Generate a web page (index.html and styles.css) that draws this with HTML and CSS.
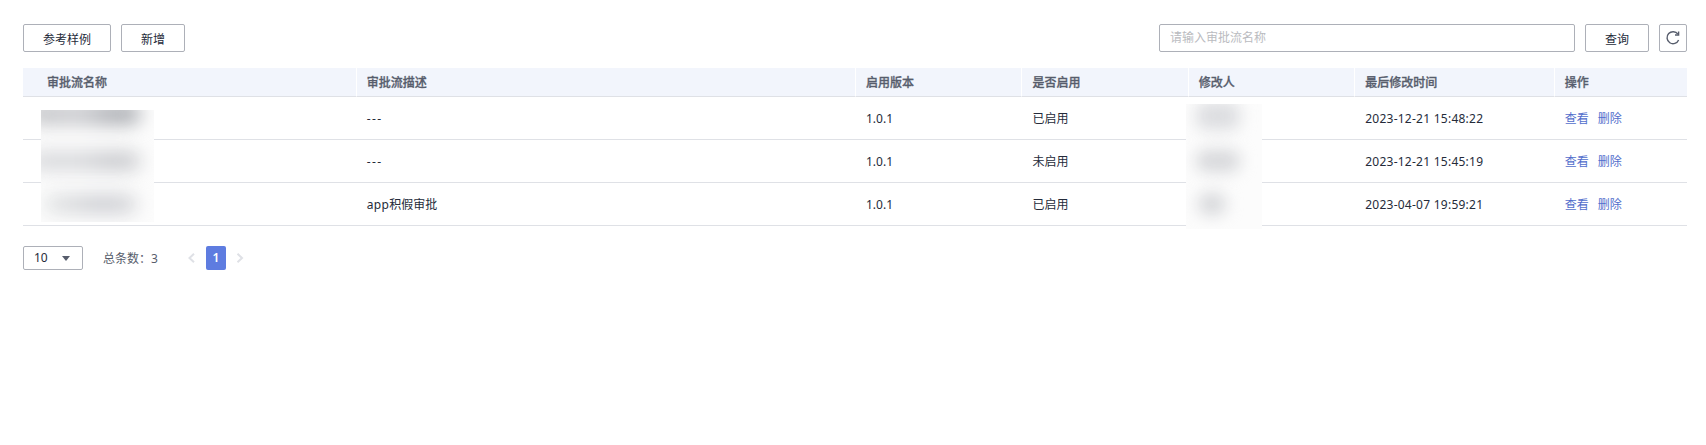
FILE: index.html
```
<!DOCTYPE html>
<html lang="zh-CN">
<head>
    <meta charset="UTF-8">
    <meta name="viewport" content="width=device-width, initial-scale=1.0">
    <title>审批流</title>
    <link rel="stylesheet" href="styles.css">
</head>
<body>
    <div class="toolbar">
        <button class="btn btn-wide">参考样例</button>
        <button class="btn">新增</button>
        <input type="text" class="search-input" placeholder="请输入审批流名称">
        <button class="btn">查询</button>
        <button class="btn btn-icon">
            <svg width="16" height="16" viewBox="0 0 16 16" fill="none" stroke="#575d6c" stroke-width="1.4">
                <path d="M13.6 10A6 6 0 1 1 12.9 4.2"/>
                <path d="M13.6 1.6V5H10"/>
            </svg>
        </button>
    </div>

    <div class="table-wrap">
        <table class="flow-table">
            <colgroup>
                <col class="col-name">
                <col class="col-desc">
                <col class="col-small">
                <col class="col-small">
                <col class="col-small">
                <col class="col-time">
                <col class="col-action">
            </colgroup>
            <thead>
                <tr>
                    <th>审批流名称</th>
                    <th>审批流描述</th>
                    <th>启用版本</th>
                    <th>是否启用</th>
                    <th>修改人</th>
                    <th>最后修改时间</th>
                    <th>操作</th>
                </tr>
            </thead>
            <tbody>
                <tr>
                    <td></td>
                    <td class="dashes">---</td>
                    <td class="version">1.0.1</td>
                    <td>已启用</td>
                    <td></td>
                    <td class="time">2023-12-21 15:48:22</td>
                    <td><a class="link">查看</a><a class="link">删除</a></td>
                </tr>
                <tr>
                    <td></td>
                    <td class="dashes">---</td>
                    <td class="version">1.0.1</td>
                    <td>未启用</td>
                    <td></td>
                    <td class="time">2023-12-21 15:45:19</td>
                    <td><a class="link">查看</a><a class="link">删除</a></td>
                </tr>
                <tr>
                    <td></td>
                    <td><span class="app">app</span>积假审批</td>
                    <td class="version">1.0.1</td>
                    <td>已启用</td>
                    <td></td>
                    <td class="time">2023-04-07 19:59:21</td>
                    <td><a class="link">查看</a><a class="link">删除</a></td>
                </tr>
            </tbody>
        </table>
        <!-- 脱敏遮罩 -->
        <div class="mask mask-name"><i></i><i></i><i></i></div>
        <div class="mask mask-user"><i></i><i></i><i></i></div>
    </div>

    <div class="pagination">
        <div class="page-size"><span>10</span><span class="caret"></span></div>
        <span class="total">总条数：<span class="total-num">3</span></span>
        <svg class="arrow" width="8" height="10" viewBox="0 0 8 10"><path d="M6 .8L1.5 5 6 9.2"/></svg>
        <span class="page-current">1</span>
        <svg class="arrow" width="8" height="10" viewBox="0 0 8 10"><path d="M1.5 .8L6 5 1.5 9.2"/></svg>
    </div>
</body>
</html>
```

FILE: styles.css
```
* {
    box-sizing: border-box;
}
body {
    margin: 0;
    padding: 24px 19px 0 23px;
    background: #fff;
    color: #252b3a;
    font-family: "Noto Sans", "Noto Sans CJK SC", sans-serif;
    font-size: 12px;
}
.toolbar {
    display: flex;
    gap: 10px;
    height: 28px;
}
.btn {
    display: flex;
    align-items: center;
    justify-content: center;
    width: 64px;
    height: 28px;
    padding: 1px 0 0;
    border: 1px solid #adb0b8;
    border-radius: 2px;
    background: #fff;
    color: #252b3a;
    font-family: inherit;
    font-size: 12px;
}
.btn-wide {
    width: 88px;
}
.btn-icon {
    width: 28px;
    padding: 0;
}
.search-input {
    width: 416px;
    height: 28px;
    margin-left: auto;
    padding: 0 10px 2px;
    border: 1px solid #adb0b8;
    border-radius: 2px;
    font-family: inherit;
    font-size: 12px;
}
.search-input::placeholder {
    color: #babbc0;
}
.table-wrap {
    position: relative;
    margin-top: 16px;
}
.flow-table {
    width: 100%;
    table-layout: fixed;
    border-spacing: 0;
}
.col-name {
    width: 20%;
}
.col-desc {
    width: 30%;
}
.col-small {
    width: 10%;
}
.col-time {
    width: 12%;
}
.col-action {
    width: 8%;
}
.flow-table th {
    height: 29px;
    padding: 2px 0 0 10px;
    border-left: 1px solid #fff;
    border-bottom: 1px solid #dfe1e6;
    background: #f2f5fc;
    color: #575d6c;
    font-weight: 500;
    line-height: 18px;
    text-align: left;
    -webkit-text-stroke: 0.3px #575d6c;
}
.flow-table td {
    height: 43px;
    padding: 2px 0 0 11px;
    border-bottom: 1px solid #dfe1e6;
    line-height: 18px;
}
.flow-table th:first-child {
    padding-left: 24px;
    border-left: none;
}
.dashes {
    letter-spacing: 1.4px;
}
.app {
    letter-spacing: 0.3px;
}
.time {
    letter-spacing: 0.25px;
}
.link {
    margin-right: 9px;
    color: #526ecc;
    cursor: pointer;
}
.mask {
    position: absolute;
    overflow: hidden;
    background: #fcfcfc;
}
.mask i {
    position: absolute;
    border-radius: 10px;
    filter: blur(9px);
}
.mask-name {
    left: 18px;
    top: 42px;
    width: 113px;
    height: 112px;
}
.mask-name i {
    left: -12px;
    width: 112px;
    height: 20px;
    background: linear-gradient(90deg, #dadbde, #d9dadd 45%, #cacbcf 75%, #cfd0d3);
}
.mask-name i:nth-child(1) {
    top: -7px;
    height: 22px;
    background: linear-gradient(90deg, #c3c4c7, #cbccd0 45%, #aeb0b5 75%, #b0b3b8);
}
.mask-name i:nth-child(2) {
    top: 41px;
}
.mask-name i:nth-child(3) {
    top: 84px;
    left: 2px;
    width: 94px;
    background: linear-gradient(90deg, #e6e8e8, #cfd0d5 60%, #d6d7da);
}
.mask-user {
    left: 1163px;
    top: 36px;
    width: 76px;
    height: 125px;
}
.mask-user i {
    left: 10px;
    width: 44px;
    height: 22px;
    background: #d6d7da;
    filter: blur(8px);
}
.mask-user i:nth-child(1) {
    top: -2px;
    height: 28px;
    background: #dcdde0;
}
.mask-user i:nth-child(2) {
    top: 46px;
}
.mask-user i:nth-child(3) {
    top: 89px;
    left: 12px;
    width: 28px;
}
.pagination {
    display: flex;
    align-items: center;
    height: 24px;
    margin-top: 20px;
    color: #575d6c;
}
.page-size {
    display: flex;
    align-items: center;
    justify-content: space-between;
    width: 60px;
    height: 24px;
    padding: 0 12px 1px 10px;
    border: 1px solid #adb0b8;
    border-radius: 2px;
    color: #252b3a;
}
.caret {
    margin-top: 1px;
    border: 4px solid transparent;
    border-top: 5px solid #575d6c;
    border-bottom: none;
}
.total {
    width: 85px;
    margin-left: 20px;
    padding-bottom: 1px;
    white-space: nowrap;
}
.arrow {
    fill: none;
    stroke: #dfe1e6;
    stroke-width: 2;
}
.page-current {
    width: 20px;
    height: 24px;
    margin: 0 10px;
    border-radius: 2px;
    background: #5e7ce0;
    color: #fff;
    font-weight: 600;
    line-height: 24px;
    text-align: center;
}
```
